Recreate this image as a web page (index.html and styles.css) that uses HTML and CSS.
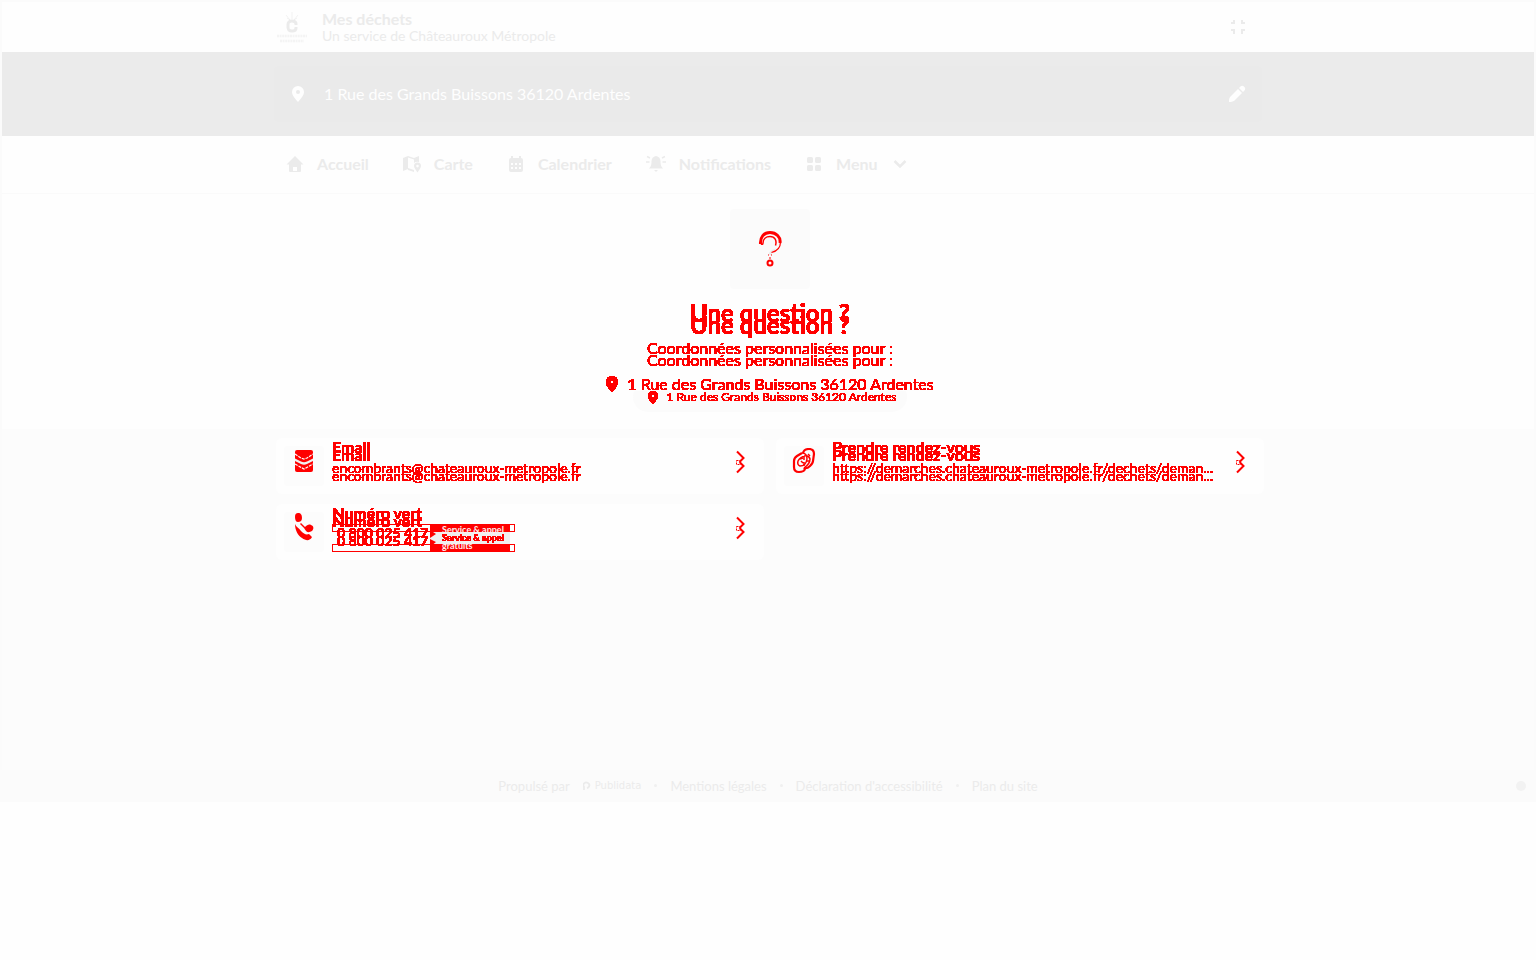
FILE: index.html
```html
<!DOCTYPE html>
<html lang="fr">
<head>
<meta charset="utf-8">
<title>Mes déchets</title>
<link rel="stylesheet" href="styles.css">
</head>
<body>
<svg class="defs" aria-hidden="true">
  <filter id="solid" x="-5%" y="-20%" width="110%" height="140%">
    <feComponentTransfer><feFuncA type="discrete" tableValues="0 1 1 1 1 1 1 1 1 1 1 1 1 1 1 1 1 1 1 1 1 1 1 1 1"/></feComponentTransfer>
  </filter>
  <symbol id="pin" viewBox="0 0 12 16"><path fill-rule="evenodd" d="M6 0a6 6 0 0 0-6 6c0 3.600 3.200 6.500 6 10 2.800-3.500 6-6.400 6-10a6 6 0 0 0-6-6zm0 4a2 2 0 1 1 0 4 2 2 0 0 1 0-4z"/></symbol>
  <symbol id="chevrons" viewBox="0 0 10 24"><path d="M2 1.500L8.500 8 4.500 12M4.500 12L8.500 16 2 22.500" fill="none" stroke="currentColor" stroke-width="2"/><path d="M1.500 10.500h4v4h-4z" fill="none" stroke="currentColor" stroke-width="1" stroke-dasharray="2 1"/></symbol>
</svg>
<div class="frame">
  <header class="header">
    <div class="wrap header-row">
      <svg class="logo" viewBox="0 0 32 34" aria-hidden="true">
        <path d="M16 2v7M10 5l4 5M22 5l-4 5M11 8l3 2M21 8l-3 2" stroke="currentColor" fill="none" opacity=".6"/>
        <path d="M20 15v-1c0-2-1-3-4-3s-4 1-4 4v2c0 3 1 4 4 4s4-1 4-3v-1" stroke="currentColor" stroke-width="3" fill="none"/>
        <path d="M1 26h30M4 31h24" stroke="currentColor" stroke-width="2.500" stroke-dasharray="2 .6" opacity=".5"/>
      </svg>
      <div class="brand"><strong>Mes déchets</strong><span>Un service de Châteauroux Métropole</span></div>
      <button class="icon-btn" aria-label="Réduire"><svg width="16" height="16" viewBox="0 0 16 16"><path d="M1 4h3V1M15 4h-3V1M1 11h3v4M15 11h-3v4" fill="none" stroke="currentColor" stroke-width="2"/></svg></button>
    </div>
  </header>
  <div class="band">
    <div class="wrap address">
      <svg width="12" height="16"><use href="#pin"/></svg>
      <span>1 Rue des Grands Buissons 36120 Ardentes</span>
      <button class="icon-btn" aria-label="Modifier"><svg width="18" height="18" viewBox="0 0 18 18" fill="currentColor"><path d="M10 4l4 4-7.500 7.500C5 17 3 17 1 17c0-2 0-4 1.500-5.500zM11 3l1.200-1.200a2.600 2.600 0 0 1 4 4L15 7z"/></svg></button>
    </div>
  </div>
  <nav class="nav">
    <div class="wrap nav-row">
      <a href="#"><svg width="18" height="18" viewBox="0 0 18 18" fill="currentColor"><path fill-rule="evenodd" d="M9 1l8.500 8.500H15V16a1 1 0 0 1-1 1H4a1 1 0 0 1-1-1V9.500H.5zM7 12v4h4v-4z"/></svg>Accueil</a>
      <a href="#"><svg width="18" height="18" viewBox="0 0 18 18" fill="currentColor"><path d="M0 3l5-2v13l-5 2zM5 1l6 2 5-2v6h-1V3l-4 1.500L5 2.500zM5 13l6 2v2l-6-2zM11 3l5-2v6a5 5 0 0 0-5 1z"/><path fill-rule="evenodd" d="M14.500 7.500a3.500 3.500 0 0 0-3.500 3.500c0 2 2 4 3.500 6.500 1.500-2.500 3.500-4.500 3.500-6.500a3.500 3.500 0 0 0-3.500-3.500zm0 2.300a1.300 1.300 0 1 1 0 2.600 1.300 1.300 0 0 1 0-2.600z"/></svg>Carte</a>
      <a href="#"><svg width="18" height="18" viewBox="0 0 18 18" fill="currentColor"><path fill-rule="evenodd" d="M4 1h2v2h6V1h2v2a2 2 0 0 1 2 2v10a2 2 0 0 1-2 2H4a2 2 0 0 1-2-2V5a2 2 0 0 1 2-2zM4 8v2h2V8zm4 0v2h2V8zm4 0v2h2V8zM4 12v2h2v-2zm4 0v2h2v-2zm4 0v2h2v-2z"/></svg>Calendrier</a>
      <a href="#"><svg width="20" height="18" viewBox="0 0 20 18" fill="currentColor"><path d="M10 1c3 .5 4.500 2.500 4.500 5.500 0 3 .5 5 2.500 7H3c2-2 2.500-4 2.500-7C5.500 3.500 7 1.500 10 1zM8 15h4l-2 2z"/><path d="M4 3L1 1.500M3.500 7H0M16 3l3-1.500M16.500 7H20" stroke="currentColor" stroke-width="1.500"/></svg>Notifications</a>
      <a href="#"><svg width="18" height="18" viewBox="0 0 18 18" fill="currentColor"><rect x="2" y="2" width="6" height="6" rx="1.500"/><rect x="10" y="2" width="6" height="6" rx="1.500"/><rect x="2" y="10" width="6" height="6" rx="1.500"/><rect x="10" y="10" width="6" height="6" rx="1.500"/></svg>Menu<svg class="caret" width="14" height="10" viewBox="0 0 14 10"><path d="M1.500 2L7 7.500 12.500 2" fill="none" stroke="currentColor" stroke-width="2.500"/></svg></a>
    </div>
  </nav>
  <main>
    <section class="hero">
      <div class="tile">
        <svg width="28" height="40" viewBox="0 0 28 40" aria-hidden="true">
          <path d="M16 21c-3 2-3 3-3 5h3c0-3 1-4 5-7z" fill="#ececec"/>
          <g fill="none" stroke="#f00"><path d="M4.500 15C4 8 8 3.500 14 3.500S25 8 24 14" stroke-width="3"/><path d="M5 15q2 1 2-1c0-4 3-6.500 7-6.500 5 0 7 4 5.500 9" stroke-width="1.500"/><path d="M24.500 13c0 6-3 9-9 10.500M12 26h1M15 26h1M13 29h2" stroke-width="1.200"/><circle cx="14" cy="34" r="2.500" stroke-width="2"/></g>
        </svg>
      </div>
      <div class="stack hero-stack">
        <div class="hero-copy red"><h1>Une question ?</h1><p>Coordonnées personnalisées pour :</p><div class="place"><svg width="12" height="16"><use href="#pin"/></svg>1 Rue des Grands Buissons 36120 Ardentes</div></div>
        <div class="hero-copy hero-low" aria-hidden="true"><h2 class="red">Une question ?</h2><p class="red">Coordonnées personnalisées pour :</p><div class="pill"><span class="pill-text red"><svg width="10" height="13"><use href="#pin"/></svg>1 Rue des Grands Buissons 36120 Ardentes</span></div></div>
      </div>
    </section>
    <section class="contacts">
      <div class="grid">
        <a class="card" href="#">
          <span class="badge"><svg width="20" height="24" viewBox="0 0 20 24"><rect x="1" y="1" width="18" height="22" rx="2"/><path d="M1 5l6 4 3 1 3-1 6-4M1 15l9 5 9-5" fill="none" stroke="#fefefe" stroke-width="1.200" stroke-dasharray="3 1"/><path d="M1 9.500l6 3q3 1.500 6 0l6-3v2.500l-6 3q-3 1.500-6 0l-6-3z" fill="#f0f0f0"/></svg></span>
          <span class="stack red">
            <span class="layer"><b>Email</b><span class="line">encombrants@chateauroux-metropole.fr</span></span>
            <span class="layer low" aria-hidden="true"><b>Email</b><span class="line">encombrants@chateauroux-metropole.fr</span></span>
          </span>
          <svg class="chev" width="10" height="24"><use href="#chevrons"/></svg>
        </a>
        <a class="card" href="#">
          <span class="badge"><svg width="24" height="26" viewBox="0 0 24 26" fill="none" stroke="#f00"><path d="M10 5l-5 3q-3 2-3 5v6q0 5 5 5 5 0 6-3l-1-1q3 1 6-2 3-3 3-5l1-7q0-5-5-5-5 0-6 4" stroke-width="2.200"/><path d="M10 5q5 0 5 6-1 7-7 7-3-1-2-5 2-4 7-5M12 8q5-1 6 3 0 5-6 9" stroke-width="1.500"/><path d="M8 11l3-1M9 13l2 2M12 9v3M12 14v4M14 13h3M16 6l2 2" stroke-width="1.500"/></svg></span>
          <span class="stack red">
            <span class="layer"><b>Prendre rendez-vous</b><span class="line">https://demarches.chateauroux-metropole.fr/dechets/deman...</span></span>
            <span class="layer low" aria-hidden="true"><b>Prendre rendez-vous</b><span class="line">https://demarches.chateauroux-metropole.fr/dechets/deman...</span></span>
          </span>
          <svg class="chev" width="10" height="24"><use href="#chevrons"/></svg>
        </a>
        <a class="card" href="#">
          <span class="badge"><svg width="20" height="28" viewBox="0 0 20 28"><path d="M4 0c3 0 4 2 4 5S6 9 4 9 1 7 1 4s1-4 3-4zM1 11c1 3 4 4 6 7 3 3 5 4 8 3l3 3c-2 4-6 4-10 1-4-2-7-8-7-14zM6 11l1-1 4 4c2-2 4-3 6-2 3 1 3 4 1 6-2 1-4 2-6 0l-2-3z"/></svg></span>
          <span class="stack">
            <b class="name red">Numéro vert</b>
            <b class="name name-low red" aria-hidden="true">Numéro vert</b>
            <span class="toll">
              <span class="rail"></span><span class="middle"></span><span class="rail"></span>
            </span>
            <span class="toll-text">
              <span class="stack red number"><span class="digits">0 800 025 417</span><span class="digits low" aria-hidden="true">0 800 025 417</span></span>
              <svg class="notch" width="7" height="20" viewBox="0 0 7 20"><path d="M0 2l6 4-6 4zM0 11l6 3-6 5z"/></svg>
              <span class="service"><span class="pale">Service &amp; appel</span><span class="red">Service &amp; appel</span><span class="pale">gratuits</span></span>
            </span>
          </span>
          <svg class="chev" width="10" height="24"><use href="#chevrons"/></svg>
        </a>
      </div>
    </section>
  </main>
  <footer class="footer">
    <span>Propulsé par</span>
    <a class="publidata" href="#"><svg width="8" height="9" viewBox="0 0 8 9"><path d="M1 9V6M1.500 6.500A3 2.800 0 1 1 4 7" fill="none" stroke="currentColor" stroke-width="1.800"/></svg>Publidata</a>
    <i class="dot"></i><a href="#">Mentions légales</a>
    <i class="dot"></i><a href="#">Déclaration d'accessibilité</a>
    <i class="dot"></i><a href="#">Plan du site</a>
    <button class="status" aria-label="Préférences"></button>
  </footer>
</div>
</body>
</html>
```

FILE: styles.css
```css
* { box-sizing: border-box; }
body { margin: 0; background: #fefefe; color: #ebebeb; font: 16px/20px Lato, sans-serif; }
a { color: inherit; text-decoration: none; }
button { border: 0; background: none; padding: 0; color: inherit; display: flex; }
h1, h2, p { margin: 0; }
.defs { position: absolute; width: 0; height: 0; }
.frame { border: 2px solid #fbfbfb; border-bottom: 0; }
.wrap { max-width: 988px; margin: 0 auto; }
.icon-btn { margin-left: auto; }

.header-row { display: flex; align-items: center; height: 50px; padding: 0 16px 0 2px; }
.logo { width: 32px; height: 34px; margin-right: 14px; }
.brand { display: flex; flex-direction: column; font-size: 14px; line-height: 17px; }
.brand strong { font-size: 16px; }

.band { background: #ebebeb; padding: 14px 0; color: #fefefe; fill: #fefefe; }
.address { display: flex; align-items: center; height: 56px; padding: 0 16px 0 18px; background: #eaeaea; border-radius: 4px; }
.address span { margin-left: 20px; }

.nav { border-bottom: 1px solid #fafafa; }
.nav-row { display: flex; gap: 34px; height: 57px; align-items: center; padding: 0 0 2px 12px; }
.nav a { display: flex; align-items: center; gap: 13px; font-weight: 700; }
.caret { margin-left: 2px; }

.stack { display: grid; min-width: 0; }
.stack > * { grid-area: 1 / 1; min-width: 0; }
.red { color: #f00; fill: #f00; filter: url(#solid); }

.hero { display: flex; flex-direction: column; align-items: center; padding: 15px 0 17px 4px; }
.tile { width: 80px; height: 80px; background: #fbfbfb; border-radius: 4px; display: flex; align-items: center; justify-content: center; }
.hero-stack { padding-top: 8px; }
.hero-copy { display: flex; flex-direction: column; align-items: center; line-height: 24px; }
.hero-copy h1, .hero-copy h2 { font-size: 24px; line-height: 32px; font-weight: 900; margin-bottom: 7px; }
.hero-copy h1, .hero-copy h2 { font-weight: 700; }
.hero-copy p { margin-bottom: 12px; }
.hero-low { padding-top: 12px; }
.place { display: flex; align-items: center; gap: 9px; }
.hero-low p { margin-bottom: 10px; }
.pill { padding: 3px 11px 3px 15px; border-radius: 15px; background: linear-gradient(transparent 9px, #fbfbfb 9px); }
.pill-text { display: flex; align-items: center; gap: 9px; font-size: 12px; line-height: 24px; }

.contacts { background: #fcfcfc; padding: 9px 16px 210px 20px; }
.grid { display: grid; grid-template-columns: 1fr 1fr; gap: 10px 12px; max-width: 988px; margin: 0 auto; }
.card { display: grid; grid-template-columns: 40px 1fr 10px; gap: 8px; height: 56px; padding: 0 19px 0 8px; background: #fefefe; border-radius: 6px; }
.badge { width: 40px; height: 40px; margin-top: 8px; background: #fcfcfc; border-radius: 4px; fill: #f00; display: flex; align-items: center; justify-content: center; }
.badge svg { margin-bottom: 10px; }
.card .stack { align-content: start; }
.layer { display: flex; flex-direction: column; }
.layer b, .name { line-height: 18px; }
.layer b { margin-bottom: 2px; }
.line { font-size: 14px; overflow: hidden; white-space: nowrap; text-overflow: ellipsis; }
.low { padding-top: 8px; }
.chev { color: #f00; margin-top: 12px; }

.name-low { padding-top: 8px; }
.toll { width: 183px; margin-top: 20px; display: flex; flex-direction: column; }
.rail { height: 8px; border: 1px solid #f00; background: linear-gradient(#f00, #f00) 97px 0 / 80px 100% no-repeat; }
.middle { height: 12px; background: linear-gradient(#f0f0f0, #f0f0f0) 98px 0 / 80px 100% no-repeat; }
.toll-text { display: flex; margin-top: 19px; padding-left: 5px; }
.number { width: 93px; font-size: 14px; font-weight: 700; white-space: nowrap; }
.notch { margin-top: 5px; fill: #f00; }
.service { display: flex; flex-direction: column; padding: 3px 0 0 5px; font-size: 9px; line-height: 8px; font-weight: 700; white-space: nowrap; }
.pale { color: #fff0f0; }

.footer { display: flex; justify-content: center; align-items: center; gap: 13px; height: 32px; padding-bottom: 1px; background: #fbfbfb; font-size: 13px; position: relative; }
.publidata { display: flex; align-items: center; gap: 4px; font: 10px/20px "DejaVu Sans", sans-serif; }
.dot { width: 3px; height: 3px; border-radius: 50%; background: #f0f0f0; }
.status { position: absolute; right: 8px; width: 10px; height: 10px; border-radius: 50%; background: #f2f2f2; }
```
